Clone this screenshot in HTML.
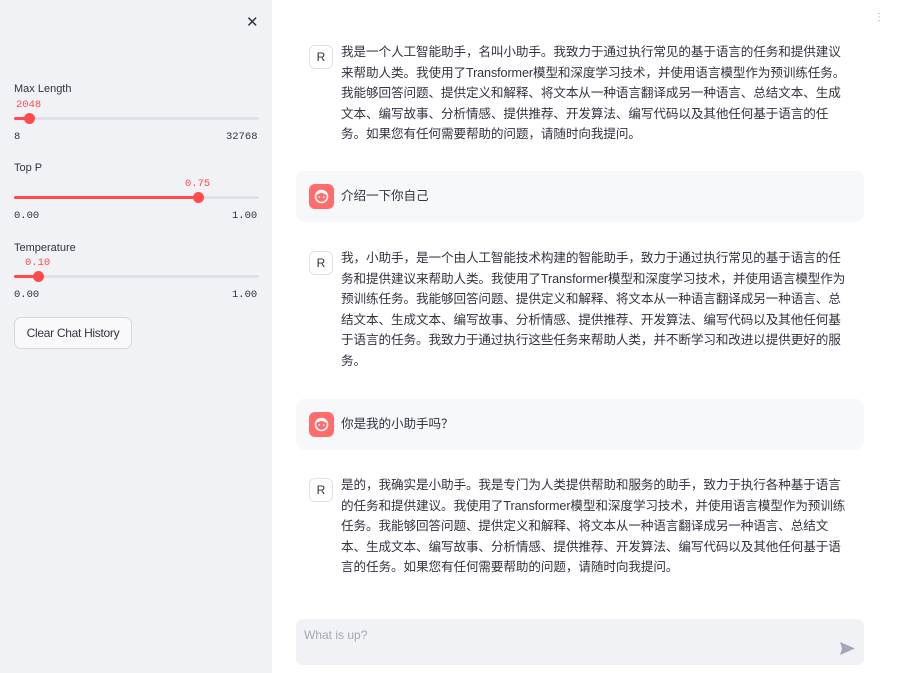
<!DOCTYPE html>
<html><head><meta charset="utf-8"><style>
*{margin:0;padding:0;box-sizing:border-box}
body{width:903px;height:673px;overflow:hidden;background:#fff;font-family:"Liberation Sans","Noto Sans CJK SC",sans-serif;color:#31333f;position:relative}
.side{position:absolute;left:0;top:0;width:272px;height:673px;background:#f0f2f6}
.x{position:absolute;left:246px;top:13px;font-size:15px;color:#31333f;font-weight:300}
.lbl{position:absolute;left:14px;font-size:11px;color:#31333f}
.val{position:absolute;font-family:"Liberation Mono",monospace;font-size:10.5px;color:#ff4b4b}
.track{position:absolute;left:14px;width:245px;height:3px;background:#dfe1e7;border-radius:2px}
.fill{position:absolute;left:0;top:0;height:3px;background:#ff4b4b;border-radius:2px}
.knob{position:absolute;top:-4px;width:11px;height:11px;border-radius:50%;background:#ff4b4b;margin-left:-5px}
.mm{position:absolute;font-family:"Liberation Mono",monospace;font-size:10.5px;color:#31333f}
.btn{position:absolute;left:14px;top:317px;width:118px;height:32px;border:1px solid #d6d8de;border-radius:7px;background:#f9f9fb;font-size:12px;letter-spacing:-0.3px;line-height:30px;text-align:center;color:#31333f}
.msg{position:absolute;left:296px;width:568px;font-size:12.6px;line-height:20.5px}
.msg .t{position:absolute;left:45px;top:0;white-space:nowrap;letter-spacing:-0.1px}
.av{position:absolute;left:13px;width:24px;height:24px;border:1px solid #dfe1e7;border-radius:6px;background:#fff;font-size:12px;text-align:center;line-height:22px}
.user{background:#f7f8fa;border-radius:8px}
.uav{position:absolute;left:13px;top:13px;width:25px;height:25px;border-radius:6px;background:#ff6c6c}
.input{position:absolute;left:296px;top:619px;width:568px;height:46px;background:#f0f2f6;border-radius:7px}
</style></head><body>
<div class="side">
<div class="x">✕</div>
<div class="lbl" style="top:83px">Max Length</div>
<div class="val" style="left:16px;top:99px">2048</div>
<div class="track" style="top:117px"><div class="fill" style="width:15px"></div><div class="knob" style="left:15px"></div></div>
<div class="mm" style="left:14px;top:131px">8</div><div class="mm" style="left:226px;top:131px">32768</div>
<div class="lbl" style="top:162px">Top P</div>
<div class="val" style="left:185px;top:178px">0.75</div>
<div class="track" style="top:196px"><div class="fill" style="width:184px"></div><div class="knob" style="left:184px"></div></div>
<div class="mm" style="left:14px;top:210px">0.00</div><div class="mm" style="left:232px;top:210px">1.00</div>
<div class="lbl" style="top:242px">Temperature</div>
<div class="val" style="left:25px;top:257px">0.10</div>
<div class="track" style="top:275px"><div class="fill" style="width:24px"></div><div class="knob" style="left:24px"></div></div>
<div class="mm" style="left:14px;top:289px">0.00</div><div class="mm" style="left:232px;top:289px">1.00</div>
<div class="btn">Clear Chat History</div>
</div>
<div style="position:absolute;left:874px;top:12px;font-size:10px;color:#999">⋮</div>

<div class="msg" style="top:42px;height:105px"><div class="av" style="top:3px">R</div><div class="t">我是一个人工智能助手，名叫小助手。我致力于通过执行常见的基于语言的任务和提供建议<br>来帮助人类。我使用了Transformer模型和深度学习技术，并使用语言模型作为预训练任务。<br>我能够回答问题、提供定义和解释、将文本从一种语言翻译成另一种语言、总结文本、生成<br>文本、编写故事、分析情感、提供推荐、开发算法、编写代码以及其他任何基于语言的任<br>务。如果您有任何需要帮助的问题，请随时向我提问。</div></div>

<div class="msg user" style="top:171px;height:51px"><div class="uav"><svg width="25" height="25" viewBox="0 0 25 25"><circle cx="12.5" cy="12.5" r="6" fill="none" stroke="#fff" stroke-width="1.6"/><circle cx="10.3" cy="13" r="0.9" fill="#fff"/><circle cx="14.7" cy="13" r="0.9" fill="#fff"/><path d="M8 10 Q12.5 6 17 10" fill="none" stroke="#fff" stroke-width="1.6"/></svg></div><div class="t" style="top:15px">介绍一下你自己</div></div>

<div class="msg" style="top:248px"><div class="av" style="top:3px">R</div><div class="t">我，小助手，是一个由人工智能技术构建的智能助手，致力于通过执行常见的基于语言的任<br>务和提供建议来帮助人类。我使用了Transformer模型和深度学习技术，并使用语言模型作为<br>预训练任务。我能够回答问题、提供定义和解释、将文本从一种语言翻译成另一种语言、总<br>结文本、生成文本、编写故事、分析情感、提供推荐、开发算法、编写代码以及其他任何基<br>于语言的任务。我致力于通过执行这些任务来帮助人类，并不断学习和改进以提供更好的服<br>务。</div></div>

<div class="msg user" style="top:399px;height:51px"><div class="uav"><svg width="25" height="25" viewBox="0 0 25 25"><circle cx="12.5" cy="12.5" r="6" fill="none" stroke="#fff" stroke-width="1.6"/><circle cx="10.3" cy="13" r="0.9" fill="#fff"/><circle cx="14.7" cy="13" r="0.9" fill="#fff"/><path d="M8 10 Q12.5 6 17 10" fill="none" stroke="#fff" stroke-width="1.6"/></svg></div><div class="t" style="top:15px">你是我的小助手吗？</div></div>

<div class="msg" style="top:475px"><div class="av" style="top:3px">R</div><div class="t">是的，我确实是小助手。我是专门为人类提供帮助和服务的助手，致力于执行各种基于语言<br>的任务和提供建议。我使用了Transformer模型和深度学习技术，并使用语言模型作为预训练<br>任务。我能够回答问题、提供定义和解释、将文本从一种语言翻译成另一种语言、总结文<br>本、生成文本、编写故事、分析情感、提供推荐、开发算法、编写代码以及其他任何基于语<br>言的任务。如果您有任何需要帮助的问题，请随时向我提问。</div></div>

<div class="input"><div style="position:absolute;left:8px;top:9px;font-size:12px;color:#a3a8b4">What is up?</div>
<svg style="position:absolute;left:544px;top:23px" width="15" height="13" viewBox="0 0 15 13"><path d="M0 0 L15 6.5 L0 13 L2 6.5Z" fill="#a3a8b8"/></svg></div>
</body></html>
